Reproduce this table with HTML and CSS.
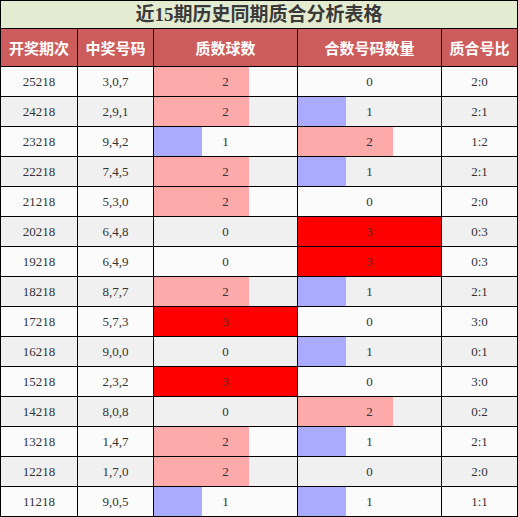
FILE: index.html
```html
<!DOCTYPE html>
<html lang="zh">
<head>
<meta charset="utf-8">
<title>近15期历史同期质合分析表格</title>
<link rel="stylesheet" href="styles.css">
</head>
<body>
<table class="grid">
  <colgroup>
    <col class="c-issue"><col class="c-num"><col class="c-bar"><col class="c-bar"><col class="c-ratio">
  </colgroup>
  <thead>
    <tr><th class="title" colspan="5">近15期历史同期质合分析表格</th></tr>
    <tr class="head">
      <th>开奖期次</th><th>中奖号码</th><th>质数球数</th><th>合数号码数量</th><th>质合号比</th>
    </tr>
  </thead>
  <tbody>
    <tr><td>25218</td><td>3,0,7</td><td><div class="bc"><div class="bar b2" style="width:66.67%"></div><span class="lbl">2</span></div></td><td><div class="bc"><div class="bar b0" style="width:0%"></div><span class="lbl">0</span></div></td><td>2:0</td></tr>
    <tr><td>24218</td><td>2,9,1</td><td><div class="bc"><div class="bar b2" style="width:66.67%"></div><span class="lbl">2</span></div></td><td><div class="bc"><div class="bar b1" style="width:33.33%"></div><span class="lbl">1</span></div></td><td>2:1</td></tr>
    <tr><td>23218</td><td>9,4,2</td><td><div class="bc"><div class="bar b1" style="width:33.33%"></div><span class="lbl">1</span></div></td><td><div class="bc"><div class="bar b2" style="width:66.67%"></div><span class="lbl">2</span></div></td><td>1:2</td></tr>
    <tr><td>22218</td><td>7,4,5</td><td><div class="bc"><div class="bar b2" style="width:66.67%"></div><span class="lbl">2</span></div></td><td><div class="bc"><div class="bar b1" style="width:33.33%"></div><span class="lbl">1</span></div></td><td>2:1</td></tr>
    <tr><td>21218</td><td>5,3,0</td><td><div class="bc"><div class="bar b2" style="width:66.67%"></div><span class="lbl">2</span></div></td><td><div class="bc"><div class="bar b0" style="width:0%"></div><span class="lbl">0</span></div></td><td>2:0</td></tr>
    <tr><td>20218</td><td>6,4,8</td><td><div class="bc"><div class="bar b0" style="width:0%"></div><span class="lbl">0</span></div></td><td><div class="bc"><div class="bar b3" style="width:100%"></div><span class="lbl">3</span></div></td><td>0:3</td></tr>
    <tr><td>19218</td><td>6,4,9</td><td><div class="bc"><div class="bar b0" style="width:0%"></div><span class="lbl">0</span></div></td><td><div class="bc"><div class="bar b3" style="width:100%"></div><span class="lbl">3</span></div></td><td>0:3</td></tr>
    <tr><td>18218</td><td>8,7,7</td><td><div class="bc"><div class="bar b2" style="width:66.67%"></div><span class="lbl">2</span></div></td><td><div class="bc"><div class="bar b1" style="width:33.33%"></div><span class="lbl">1</span></div></td><td>2:1</td></tr>
    <tr><td>17218</td><td>5,7,3</td><td><div class="bc"><div class="bar b3" style="width:100%"></div><span class="lbl">3</span></div></td><td><div class="bc"><div class="bar b0" style="width:0%"></div><span class="lbl">0</span></div></td><td>3:0</td></tr>
    <tr><td>16218</td><td>9,0,0</td><td><div class="bc"><div class="bar b0" style="width:0%"></div><span class="lbl">0</span></div></td><td><div class="bc"><div class="bar b1" style="width:33.33%"></div><span class="lbl">1</span></div></td><td>0:1</td></tr>
    <tr><td>15218</td><td>2,3,2</td><td><div class="bc"><div class="bar b3" style="width:100%"></div><span class="lbl">3</span></div></td><td><div class="bc"><div class="bar b0" style="width:0%"></div><span class="lbl">0</span></div></td><td>3:0</td></tr>
    <tr><td>14218</td><td>8,0,8</td><td><div class="bc"><div class="bar b0" style="width:0%"></div><span class="lbl">0</span></div></td><td><div class="bc"><div class="bar b2" style="width:66.67%"></div><span class="lbl">2</span></div></td><td>0:2</td></tr>
    <tr><td>13218</td><td>1,4,7</td><td><div class="bc"><div class="bar b2" style="width:66.67%"></div><span class="lbl">2</span></div></td><td><div class="bc"><div class="bar b1" style="width:33.33%"></div><span class="lbl">1</span></div></td><td>2:1</td></tr>
    <tr><td>12218</td><td>1,7,0</td><td><div class="bc"><div class="bar b2" style="width:66.67%"></div><span class="lbl">2</span></div></td><td><div class="bc"><div class="bar b0" style="width:0%"></div><span class="lbl">0</span></div></td><td>2:0</td></tr>
    <tr><td>11218</td><td>9,0,5</td><td><div class="bc"><div class="bar b1" style="width:33.33%"></div><span class="lbl">1</span></div></td><td><div class="bc"><div class="bar b1" style="width:33.33%"></div><span class="lbl">1</span></div></td><td>1:1</td></tr>
  </tbody>
</table>
</body>
</html>
```

FILE: styles.css
```css
html, body {
  margin: 0;
  padding: 0;
  background: #ffffff;
}

.grid {
  width: 518px;
  border-collapse: collapse;
  table-layout: fixed;
  font-family: "Liberation Serif", "Noto Sans CJK SC", serif;
  color: #333333;
}

.c-issue { width: 77px; }
.c-num { width: 76px; }
.c-bar { width: 144px; }
.c-ratio { width: 76px; }

.grid th,
.grid td {
  border: 1px solid #000000;
  padding: 0;
  text-align: center;
}

.title {
  height: 27px;
  background: #e3ecd0;
  font-family: "Liberation Serif", "Noto Sans CJK SC", sans-serif;
  font-size: 19px;
  font-weight: bold;
  color: #3a3a3a;
  line-height: 27px;
}

.head th {
  height: 37px;
  background: #cd5c5c;
  color: #ffffff;
  font-family: "Noto Sans CJK SC", sans-serif;
  font-size: 15px;
  font-weight: bold;
}

.grid td {
  height: 29px;
  font-size: 13px;
  background: #fbfbfb;
}

.grid tbody tr:nth-child(even) td {
  background: #f0f0f0;
}

.bc {
  display: grid;
  height: 29px;
}

.bar,
.lbl {
  grid-area: 1 / 1;
}

.bar {
  height: 100%;
  justify-self: start;
}

.lbl {
  align-self: center;
  justify-self: center;
}

.b1 { background: #aaaaff; }
.b2 { background: #ffaaaa; }
.b3 { background: #ff0000; }
.b0 { background: transparent; }
```
